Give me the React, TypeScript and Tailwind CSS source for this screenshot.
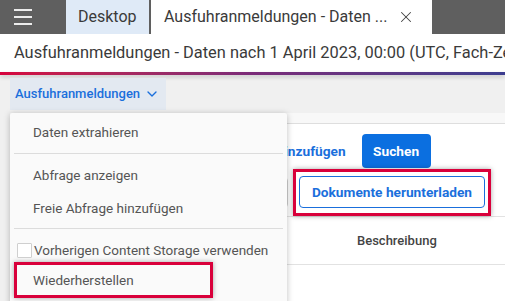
import { X, ChevronDown } from 'lucide-react'

const font = { fontFamily: 'Roboto, "Noto Sans", sans-serif' }

function TopBar() {
  return (
    <div className="flex h-[34px] bg-[#5f5f5f]">
      <div className="flex w-[66px] items-center pl-[14px]">
        <div className="flex w-[18px] flex-col gap-[5px]">
          <span className="h-[2px] bg-[#ececec]" />
          <span className="h-[2px] bg-[#ececec]" />
          <span className="h-[2px] bg-[#ececec]" />
        </div>
      </div>
      <div className="flex w-[83px] items-center bg-[#dfeaf7] pl-[12px] text-[16px] text-[#3a3a3a]">Desktop</div>
      <div className="ml-[2px] flex w-[281px] items-center bg-white pl-[13px] text-[16px] text-[#3a3a3a]">
        <span className="whitespace-nowrap">Ausfuhranmeldungen - Daten ...</span>
        <X className="ml-[10px] text-[#444]" size={18} strokeWidth={1.4} />
      </div>
    </div>
  )
}

function Menu() {
  return (
    <div className="absolute left-[10px] top-[113px] h-[200px] w-[277px] rounded-[2px] bg-[#fafafa] text-[13.5px] text-[#555] shadow-[0_1px_6px_rgba(0,0,0,0.25)]">
      <div className="flex h-[38px] items-center pl-[23px]">Daten extrahieren</div>
      <div className="mx-[4px] mt-[2px] h-px bg-[#dcdcdc]" />
      <div className="mt-[5px] flex h-[32px] items-center pl-[23px]">Abfrage anzeigen</div>
      <div className="flex h-[34px] items-center pl-[23px]">Freie Abfrage hinzufügen</div>
      <div className="mx-[4px] mt-[3px] h-px bg-[#dcdcdc]" />
      <div className="mt-[9px] flex h-[24px] items-center pl-[7px]">
        <span className="mr-[2px] h-[15px] w-[15px] rounded-[1px] border border-[#cfcfcf] bg-white" />
        Vorherigen Content Storage verwenden
      </div>
      <div className="ml-[4px] flex h-[36px] w-[199px] items-center border-[3px] border-[#d9003b] pl-[16px] shadow-[0_0_5px_rgba(0,0,0,0.35)]">
        Wiederherstellen
      </div>
    </div>
  )
}

export default function App() {
  return (
    <div className="relative h-[301px] w-[505px] overflow-hidden bg-[#f0f0f0]" style={font}>
      <TopBar />
      <div className="flex h-[38px] items-center overflow-hidden bg-white pl-[14px] text-[16.4px] text-[#3a3a3a]">
        <span className="whitespace-nowrap">Ausfuhranmeldungen - Daten nach 1 April 2023, 00:00 (UTC, Fach-Zeit)</span>
      </div>
      <div className="h-[3px] bg-gradient-to-r from-[#d6003b] via-[#7a2a78] to-[#3c3d8f] shadow-[0_2px_4px_rgba(0,0,0,0.2)]" />

      <div className="ml-[10px] mt-[3px] flex h-[32px] w-[156px] items-center gap-[4px] bg-[#e3e9f1] pl-[5px] text-[13px] font-medium text-[#1a6fdc]">
        Ausfuhranmeldungen
        <ChevronDown size={16} strokeWidth={2} />
      </div>

      <div className="ml-[10px] mt-[3px] bg-white">
        <div className="h-[11px] border-b border-[#dedede] bg-[#f8f8f8]" />
        <div className="flex h-[44px] items-end">
          <div className="ml-[180px] flex h-[34px] items-center text-[13.7px] font-bold text-[#1a6fdc]">Freie Abfrage hinzufügen</div>
          <div className="ml-[16px] flex h-[34px] w-[69px] items-center justify-center rounded-[4px] bg-[#0b6fe0] text-[13.7px] font-bold text-white">
            Suchen
          </div>
        </div>
        <div className="flex h-[48px] items-center">
          <div className="ml-[260px] h-[31px] w-[18px] rounded-[4px] border border-[#cfcfcf]" />
          <div className="ml-[5px] flex h-[47px] w-[198px] items-center justify-center border-[3px] border-[#d9003b] shadow-[0_0_5px_rgba(0,0,0,0.35)]">
            <div className="flex h-[32px] w-[186px] items-center justify-center rounded-[4px] border border-[#1a6fdc] bg-white text-[13.7px] font-bold text-[#1a6fdc]">
              Dokumente herunterladen
            </div>
          </div>
        </div>
        <div className="flex h-[49px] items-center border-y border-[#e2e2e2] pl-[347px] text-[13px] font-medium text-[#444]">
          Beschreibung
        </div>
        <div className="h-[40px]" />
      </div>

      <Menu />
    </div>
  )
}
